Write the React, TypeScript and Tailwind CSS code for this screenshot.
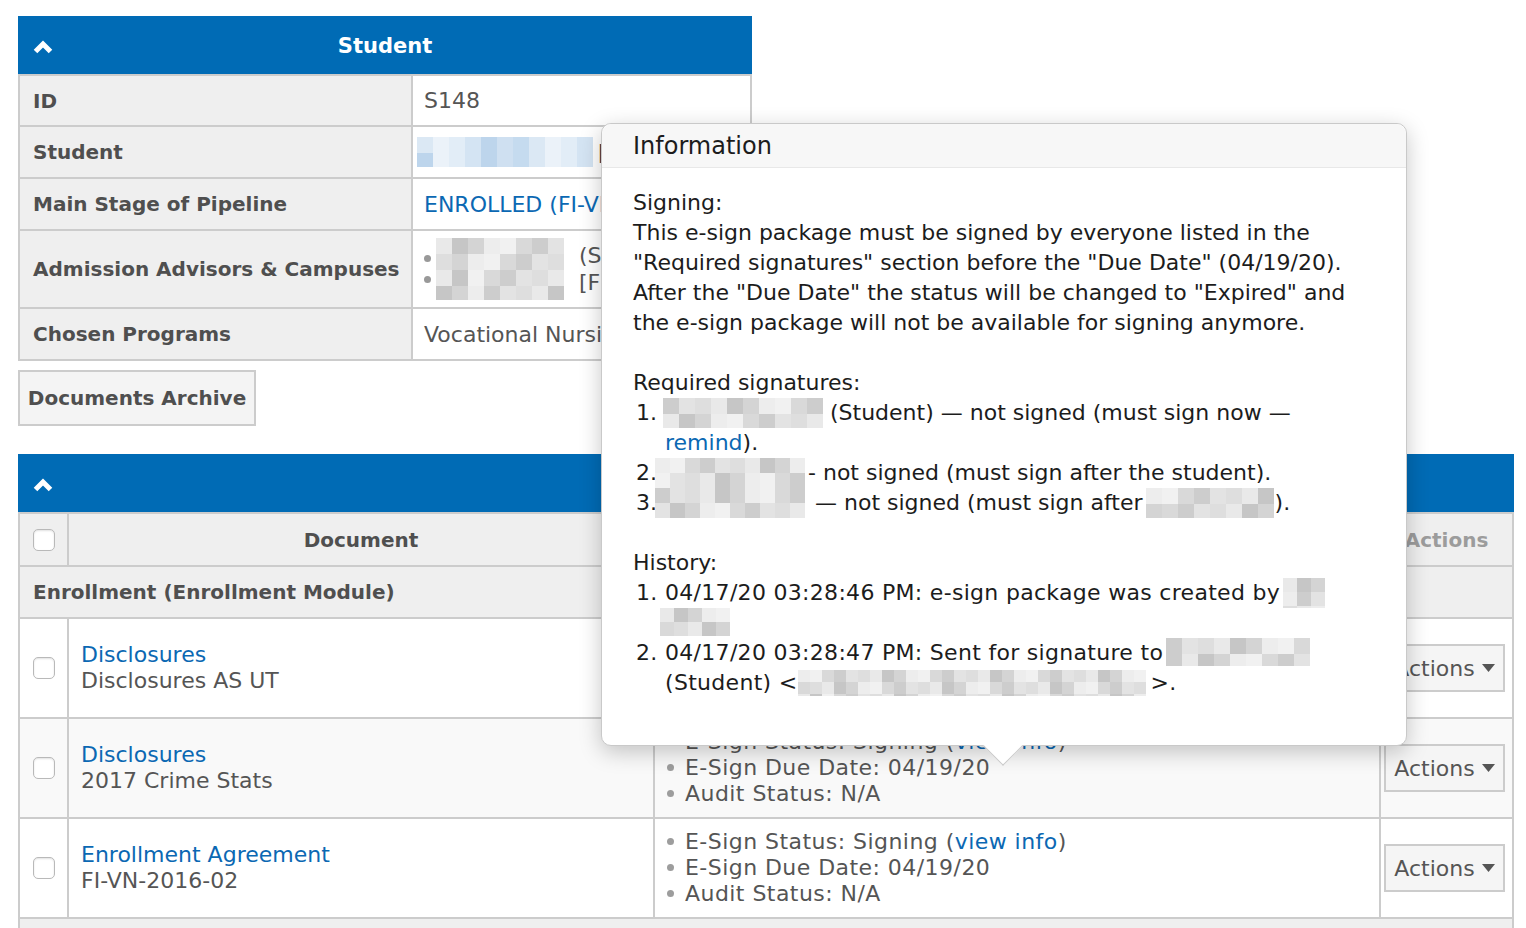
import React from "react";

const grayCells = [
    "bg-[#e9e9e9]",
    "bg-[#d4d4d4]",
    "bg-[#f1f1f1]",
    "bg-[#cdcdcd]",
    "bg-[#dedede]",
    "bg-[#c6c6c6]",
    "bg-[#ededed]",
    "bg-[#d9d9d9]",
    "bg-[#e3e3e3]",
];

const blueCells = [
    "bg-[#d4e4f3]",
    "bg-[#c5dbef]",
    "bg-[#e2edf7]",
    "bg-[#cfe0f1]",
    "bg-[#ebf2f9]",
    "bg-[#bdd5ec]",
    "bg-[#dbe8f4]",
];

// pixelated placeholder for the redacted names
function Blur({ w, h, cell = 16, tone = "gray", seed = 0, className = "" }: { w: number; h: number; cell?: number; tone?: "gray" | "blue"; seed?: number; className?: string }) {
    const palette = tone === "blue" ? blueCells : grayCells;
    const cols = Math.ceil(w / cell);
    const rows = Math.ceil(h / cell);
    const cells = [];
    for (let i = 0; i < cols * rows; i++) {
        cells.push(<span key={i} className={`block shrink-0 ${palette[(i * 5 + seed * 3 + Math.floor(i / cols)) % palette.length]}`} style={{ width: cell, height: cell }} />);
    }
    return (
        <span className={`inline-flex flex-wrap overflow-hidden align-top ${className}`} style={{ width: w, height: h }}>
            {cells}
        </span>
    );
}

function Chevron() {
    return (
        <svg width="22" height="16" viewBox="0 0 22 16" className="shrink-0">
            <polyline points="3.5,12.5 11,5 18.5,12.5" fill="none" stroke="white" strokeWidth="5" strokeLinejoin="miter" />
        </svg>
    );
}

function Checkbox() {
    return <div className="w-[22px] h-[22px] rounded-[5px] border border-[#b9b9b9] bg-white shadow-[inset_0_1px_2px_rgba(0,0,0,0.12)]" />;
}

function Dot() {
    return <span className="inline-block w-[7px] h-[7px] rounded-full bg-[#9d9d9d] mr-[11px] align-middle relative -top-[2px]" />;
}

function ActionsButton() {
    return (
        <div className="w-[121px] h-[48px] border-2 border-[#cccccc] bg-[#f5f5f5] flex items-center justify-center gap-[7px] text-[22px] text-[#555]">
            Actions
            <svg width="13" height="8" viewBox="0 0 13 8">
                <path d="M0 0 H13 L6.5 8 Z" fill="#555" />
            </svg>
        </div>
    );
}

// value text runs on under the popover; only the part left of it shows
function InfoRow({ label, children, h }: { label: string; children: React.ReactNode; h: string }) {
    return (
        <div className={`grid grid-cols-[393px_337px] border-b-2 border-[#cccccc] ${h}`}>
            <div className="bg-[#efefef] border-r-2 border-[#cccccc] flex items-center pl-[13px] text-[20px] font-bold text-[#4f4f4f]">{label}</div>
            <div className="flex items-center pl-[4px] text-[22px] text-[#555] whitespace-nowrap">
                <div className="w-[185px] overflow-hidden flex items-center">{children}</div>
            </div>
        </div>
    );
}

function StatusLines({ link }: { link: boolean }) {
    return (
        <div className="text-[22px] leading-[26px] tracking-[0.45px] text-[#555] whitespace-nowrap">
            <div>
                <Dot />E-Sign Status: Signing ({link ? <span className="text-[#0b68b3]">view info</span> : "view info"})
            </div>
            <div>
                <Dot />E-Sign Due Date: 04/19/20
            </div>
            <div>
                <Dot />Audit Status: N/A
            </div>
        </div>
    );
}

function DocRow({ title, sub, bg, status = true }: { title: string; sub: string; bg: string; status?: boolean }) {
    return (
        <div className={`grid grid-cols-[49px_586px_726px_131px] h-[100px] border-b-2 border-[#cccccc] ${bg}`}>
            <div className="border-r-2 border-[#cccccc] flex items-center pl-[13px]">
                <Checkbox />
            </div>
            <div className="border-r-2 border-[#cccccc] flex flex-col justify-center pl-[12px] text-[22px] leading-[26px]">
                <span className="text-[#0b68b3]">{title}</span>
                <span className="text-[#555]">{sub}</span>
            </div>
            <div className="border-r-2 border-[#cccccc] flex items-center pl-[12px]">{status && <StatusLines link />}</div>
            <div className="flex items-center pl-[3px]">
                <ActionsButton />
            </div>
        </div>
    );
}

function Popover() {
    return (
        <div className="absolute left-[601px] top-[123px] w-[806px] h-[623px] bg-white rounded-[10px] border border-[#c9c9c9] shadow-[0_6px_22px_rgba(0,0,0,0.22)] text-[22px] text-[#1c1c1c]">
            <div className="h-[44px] bg-[#f7f7f7] border-b border-[#e8e8e8] rounded-t-[10px] flex items-center pl-[31px] text-[24px]">Information</div>
            <div className="px-[31px] pt-[20px] leading-[30px] whitespace-nowrap">
                <div>Signing:</div>
                <div>This e-sign package must be signed by everyone listed in the</div>
                <div>"Required signatures" section before the "Due Date" (04/19/20).</div>
                <div>After the "Due Date" the status will be changed to "Expired" and</div>
                <div>the e-sign package will not be available for signing anymore.</div>
                <div className="h-[30px]" />
                <div>Required signatures:</div>
                <div className="grid grid-cols-[32px_1fr]">
                    <span className="pl-[3px]">1.</span>
                    <div>
                        <Blur w={160} h={30} cell={16} seed={1} className="-ml-[2px]" /> (Student) — not signed (must sign now —
                        <br />
                        <span className="text-[#0b68b3]">remind</span>).
                    </div>
                    <span className="pl-[3px]">2.</span>
                    <div>
                        <Blur w={153} h={30} cell={15} seed={2} className="-ml-[10px]" />- not signed (must sign after the student).
                    </div>
                    <span className="pl-[3px]">3.</span>
                    <div>
                        <Blur w={153} h={30} cell={15} seed={4} className="-ml-[10px]" /> — not signed (must sign after <Blur w={129} h={30} cell={16} seed={5} className="-ml-[4px]" />).
                    </div>
                </div>
                <div className="h-[30px]" />
                <div>History:</div>
                <div className="grid grid-cols-[32px_1fr] tracking-[0.3px]">
                    <span className="pl-[3px]">1.</span>
                    <div>
                        04/17/20 03:28:46 PM: e-sign package was created by <Blur w={55} h={30} cell={14} seed={3} className="-ml-[4px]" />
                        <br />
                        <Blur w={80} h={28} cell={14} seed={6} className="-ml-[5px]" />
                    </div>
                    <span className="pl-[3px]">2.</span>
                    <div>
                        04/17/20 03:28:47 PM: Sent for signature to <Blur w={159} h={28} cell={16} seed={7} className="-ml-[4px]" />
                        <br />
                        (Student) &lt;<Blur w={353} h={26} cell={12} seed={8} className="mt-[2px]" />&gt;.
                    </div>
                </div>
            </div>
            <div className="absolute left-[387px] -bottom-[15px] w-[28px] h-[28px] rotate-45 bg-white border-r border-b border-[#c9c9c9]" />
        </div>
    );
}

export default function App() {
    return (
        <div className="relative min-h-screen bg-white font-['DejaVu_Sans',sans-serif] pl-[18px] pt-[16px] overflow-hidden">
            {/* Student panel */}
            <div className="w-[734px]">
                <div className="h-[58px] bg-[#006bb5] flex items-center px-[14px] pt-[3px]">
                    <Chevron />
                    <div className="flex-1 text-center text-white font-bold text-[21px]">Student</div>
                    <div className="w-[22px]" />
                </div>
                <div className="border-x-2 border-t-2 border-[#cccccc]">
                    <InfoRow label="ID" h="h-[51px]">
                        <span className="pl-[7px]">S148</span>
                    </InfoRow>
                    <InfoRow label="Student" h="h-[52px]">
                        <Blur w={180} h={30} cell={16} tone="blue" seed={2} className="shrink-0" />
                        <span className="ml-[1px] text-[#444]">[S148]</span>
                    </InfoRow>
                    <InfoRow label="Main Stage of Pipeline" h="h-[52px]">
                        <span className="pl-[7px] text-[#0b68b3]">ENROLLED (FI-VN-2016-02)</span>
                    </InfoRow>
                    <InfoRow label="Admission Advisors & Campuses" h="h-[78px]">
                        <div className="flex items-center pl-[7px]">
                            <div className="flex flex-col gap-[14px] mr-[5px] shrink-0">
                                <span className="w-[7px] h-[7px] rounded-full bg-[#999]" />
                                <span className="w-[7px] h-[7px] rounded-full bg-[#999]" />
                            </div>
                            <Blur w={140} h={62} cell={16} seed={3} className="shrink-0" />
                            <div className="flex flex-col leading-[27px] ml-[3px]">
                                <span>(San Antonio)</span>
                                <span>[FI]</span>
                            </div>
                        </div>
                    </InfoRow>
                    <InfoRow label="Chosen Programs" h="h-[52px]">
                        <span className="pl-[7px]">Vocational Nursing</span>
                    </InfoRow>
                </div>
            </div>

            <div className="mt-[9px] w-[238px] h-[56px] border-2 border-[#cccccc] bg-[#f4f4f4] flex items-center justify-center text-[20px] font-bold text-[#4f4f4f]">Documents Archive</div>

            {/* Documents panel */}
            <div className="mt-[28px] w-[1496px]">
                <div className="h-[58px] bg-[#006bb5] flex items-center px-[14px] pt-[3px]">
                    <Chevron />
                </div>
                <div className="border-x-2 border-t-2 border-[#cccccc]">
                    <div className="grid grid-cols-[49px_586px_726px_131px] h-[53px] border-b-2 border-[#cccccc] bg-[#efefef] text-[20px] font-bold">
                        <div className="border-r-2 border-[#cccccc] flex items-center pl-[13px]">
                            <Checkbox />
                        </div>
                        <div className="border-r-2 border-[#cccccc] flex items-center justify-center text-[#4f4f4f]">Document</div>
                        <div className="border-r-2 border-[#cccccc]" />
                        <div className="flex items-center justify-center text-[#9c9c9c]">Actions</div>
                    </div>
                    <div className="h-[52px] border-b-2 border-[#cccccc] bg-[#efefef] flex items-center pl-[13px] text-[20px] font-bold text-[#4f4f4f]">Enrollment (Enrollment Module)</div>
                    <DocRow title="Disclosures" sub="Disclosures AS UT" bg="bg-white" status={false} />
                    <DocRow title="Disclosures" sub="2017 Crime Stats" bg="bg-[#f9f9f9]" />
                    <DocRow title="Enrollment Agreement" sub="FI-VN-2016-02" bg="bg-white" />
                    <div className="h-[50px] bg-[#efefef]" />
                </div>
            </div>

            <Popover />
        </div>
    );
}
